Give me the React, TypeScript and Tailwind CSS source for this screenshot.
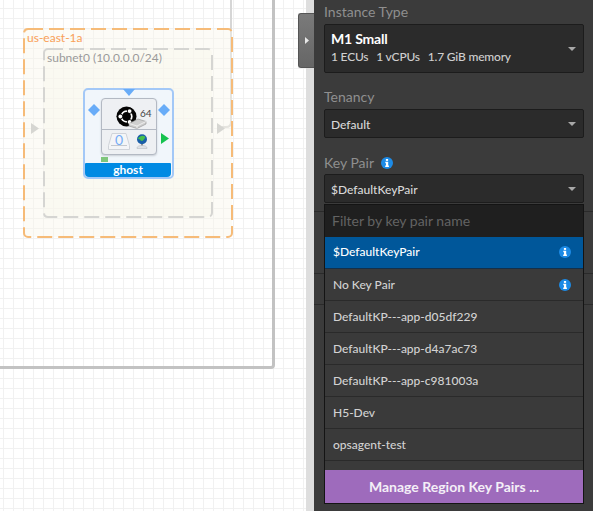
import React from "react";

const keyPairs = [
  { name: "$DefaultKeyPair", info: true, selected: true },
  { name: "No Key Pair", info: true },
  { name: "DefaultKP---app-d05df229" },
  { name: "DefaultKP---app-d4a7ac73" },
  { name: "DefaultKP---app-c981003a" },
  { name: "H5-Dev" },
  { name: "opsagent-test" },
];

const Caret = () => (
  <svg width="8" height="4" viewBox="0 0 8 4" className="shrink-0">
    <path d="M0 0h8L4 4z" fill="#a8a8a8" />
  </svg>
);

const InfoIcon = () => (
  <svg width="12" height="12" viewBox="0 0 12 12" className="shrink-0">
    <circle cx="6" cy="6" r="6" fill="#1d8be6" />
    <rect x="4.900" y="2" width="2.200" height="1.900" fill="#fff" />
    <path d="M4.300 4.800h2.900v3.800h.7V10H4.200V8.600h.8V6.200h-.7z" fill="#fff" />
  </svg>
);

const Select = ({ children, className }: { children: React.ReactNode; className: string }) => (
  <div
    className={`flex items-center justify-between pl-[6px] pr-[7px] rounded-[2px] border border-[#1c1c1c] bg-[#2b2b2b] ${className}`}
  >
    <div className="pb-[2px]">{children}</div>
    <Caret />
  </div>
);

const Port = ({ className, color = "#d6d6d2" }: { className: string; color?: string }) => (
  <svg width="8" height="11" viewBox="0 0 8 11" className={`absolute ${className}`}>
    <path d="M0 0l8 5.500L0 11z" fill={color} />
  </svg>
);

const Diamond = ({ className }: { className: string }) => (
  <svg width="12" height="12" viewBox="0 0 12 12" className={`absolute ${className}`}>
    <path d="M6 0l6 6-6 6-6-6z" fill="#68acf8" />
  </svg>
);

const DashedBox = ({ stroke }: { stroke: string }) => (
  <svg width="100%" height="100%" className="absolute inset-0">
    <rect
      x="1"
      y="1"
      width="calc(100% - 2px)"
      height="calc(100% - 2px)"
      rx="4"
      fill="#f9f6ea"
      fillOpacity=".45"
      stroke={stroke}
      strokeWidth="2"
      strokeDasharray="15 6"
    />
  </svg>
);

const UbuntuIcon = () => (
  <svg width="54" height="31" viewBox="0 0 54 31" className="absolute left-0 top-0">
    <circle cx="24.500" cy="17.500" r="10" fill="#050505" />
    <circle cx="24.500" cy="17.500" r="5.300" fill="none" stroke="#fff" strokeWidth="1.700" />
    {/* the three gaps + dots of the logo */}
    <circle cx="17.800" cy="17.500" r="3" fill="#050505" />
    <circle cx="27.850" cy="11.700" r="3" fill="#050505" />
    <circle cx="27.850" cy="23.300" r="3" fill="#050505" />
    <circle cx="18.300" cy="17.500" r="1.900" fill="#fff" />
    <circle cx="27.600" cy="12.100" r="1.900" fill="#fff" />
    <circle cx="27.600" cy="22.900" r="1.900" fill="#fff" />
    {/* volume */}
    <path d="M27 24.500l9-4.500 8 2.500v2.500l-9 4.500-8-2.500z" fill="#cfcfcf" stroke="#8f8f8f" strokeWidth=".6" />
    <path d="M27 24.500l8 2.500 9-4.500M35 27v2.500" fill="none" stroke="#f5f5f5" strokeWidth=".8" />
  </svg>
);

const DiskIcon = () => (
  <div className="relative w-[22px] h-[17px]">
    <svg width="22" height="17" viewBox="0 0 22 17" className="absolute inset-0">
      <path d="M4 .5h14l3.500 12v4H.5v-4z" fill="#f4f5f7" stroke="#cfd3d9" />
      <path d="M3 12.500h16" stroke="#c4c8ce" />
    </svg>
    <span className="absolute inset-x-0 top-[-1px] text-center text-[14px] leading-[16px] text-[#76adf6] font-['Lato',sans-serif]">
      0
    </span>
  </div>
);

const GlobeIcon = () => (
  <svg width="12" height="15" viewBox="0 0 12 15">
    <circle cx="6" cy="5.200" r="5" fill="#1b5fa8" />
    <path d="M2 4.500c2-3 5-3.500 7-2 .8 1.500-.8 2-1.500 3.500-1 1.500-3 1-3 0-.2-1-2-.5-2.500-1.500z" fill="#46c04a" />
    <path d="M5 10h2v2H5z" fill="#8a8f96" />
    <path d="M1 14c0-1.500 2-2.500 5-2.500s5 1 5 2.500v.5H1z" fill="#dfe2e6" stroke="#b8bcc3" strokeWidth=".6" />
  </svg>
);

const InstanceNode = () => (
  <div className="relative ml-[40px] mt-[20px] w-[91px] h-[91px] flex flex-col rounded-[5px] border-2 border-[#a3c8f7] bg-[#f1f6fb]">
    <svg width="12" height="7" viewBox="0 0 12 7" className="absolute left-[38px] top-[-1px]">
      <path d="M0 0h12L6 7z" fill="#68acf8" />
    </svg>
    <Diamond className="left-[3px] top-[14px]" />
    <Diamond className="left-[73px] top-[14px]" />
    <Port className="left-[76px] top-[43px]" color="#16c24f" />

    <div className="mt-[8px] ml-[16px] w-[56px] h-[57px] flex flex-col rounded-[4px] border border-[#b3b9c3] bg-[#eef0f3] shadow-[0_1px_2px_#c9ced6]">
      <div className="relative h-[31px] shrink-0 border-b border-[#b3b9c3]">
        <UbuntuIcon />
        <span className="absolute left-[38px] top-[8px] text-[10px] leading-[13px] text-[#454545] font-['Lato',sans-serif]">
          64
        </span>
      </div>
      <div className="flex items-center gap-[6px] pl-[6px] pt-[3px]">
        <DiskIcon />
        <GlobeIcon />
      </div>
    </div>

    <div className="ml-[16px] mt-[2px] w-[7px] h-[5px] bg-[#7fc67c]" />
    <div className="mt-auto mr-[1px] h-[14px] rounded-b-[4px] rounded-t-[1px] bg-[#008ae3] text-center text-[12px] leading-[14px] font-bold text-white font-['Lato',sans-serif]">
      ghost
    </div>
  </div>
);

const Canvas = () => (
  <div className="relative w-[306px] h-full shrink-0 overflow-hidden bg-white bg-[linear-gradient(#f1f1f1_1px,transparent_1px),linear-gradient(90deg,#f1f1f1_1px,transparent_1px)] bg-[size:10px_10px] bg-[position:3px_8px]">
    {/* vpc frame */}
    <div className="absolute left-[-20px] top-[-20px] w-[295px] h-[389px] rounded-[4px] border-[3px] border-[#c2c2c2]" />

    {/* connector going up out of the zone */}
    <svg width="240" height="140" viewBox="0 0 240 140" className="absolute left-0 top-0">
      <path d="M231 0v122q0 5-5 5h-4" fill="none" stroke="#d6d6d6" strokeWidth="2" />
    </svg>

    {/* availability zone */}
    <div className="absolute left-[23px] top-[28px] w-[210px] h-[210px] font-['Lato',sans-serif] text-[12px]">
      <DashedBox stroke="#f6bb78" />
      <div className="relative h-[20px] pl-[4px] leading-[20px] text-[#f9a058]">us-east-1a</div>
      <div className="relative mx-[20px] h-[170px]">
        <DashedBox stroke="#d5d5d2" />
        <div className="relative h-[20px] pl-[4px] leading-[20px] text-[#9a9a9a]">subnet0 (10.0.0.0/24)</div>
        <InstanceNode />
      </div>
    </div>

    <Port className="left-[31px] top-[123px]" />
    <Port className="left-[217px] top-[123px]" />
  </div>
);

const Panel = () => (
  <div className="relative w-[279px] h-full shrink-0 bg-[#3b3b3b] font-['Lato',sans-serif]">
    <div className="pl-[10px] pr-[9px]">
      <div className="h-[24px] pt-[3px] text-[14px] leading-[18px] text-[#8f8f8f]">Instance Type</div>
      <Select className="h-[49px]">
        <div className="mb-[1px] text-[14px] leading-[18px] font-bold tracking-[-0.2px] text-white">M1 Small</div>
        <div className="flex gap-[8px] text-[12px] leading-[16px] font-medium tracking-[-0.2px] text-[#cfcfcf]">
          <span>1 ECUs</span>
          <span>1 vCPUs</span>
          <span>1.7 GiB memory</span>
        </div>
      </Select>
      <div className="h-[36px] pt-[15px] text-[14px] leading-[18px] text-[#8f8f8f]">Tenancy</div>
      <Select className="h-[29px]">
        <span className="text-[12px] font-medium text-[#d8d8d8]">Default</span>
      </Select>
      <div className="flex items-center gap-[7px] h-[36px] pt-[13px] text-[14px] leading-[18px] text-[#8f8f8f]">
        Key Pair <InfoIcon />
      </div>
      <Select className="h-[29px]">
        <span className="text-[12px] font-medium text-[#d8d8d8]">$DefaultKeyPair</span>
      </Select>
    </div>

    {/* rows hidden behind the open dropdown */}
    <div className="mt-[8px] border-t border-[#2a2a2a] h-[62px]" />
    <div className="border-t border-[#2a2a2a] h-[31px]" />
    <div className="border-t border-[#2a2a2a] h-[31px]" />

    {/* open key pair dropdown */}
    <div className="absolute left-[10px] top-[204px] w-[260px] h-[300px] flex flex-col border border-[#141414] bg-[#3a3a3a]">
      <div className="h-[32px] shrink-0 flex items-center px-[7px] pb-[2px] bg-[#1f1f1f] text-[14px] text-[#636363]">
        Filter by key pair name
      </div>
      {keyPairs.map((kp) => (
        <div
          key={kp.name}
          className={`h-[32px] shrink-0 flex items-center justify-between pl-[8px] pr-[12px] text-[12px] font-medium border-b ${
            kp.selected ? "bg-[#00579a] text-white border-[#14304a] pb-[1px]" : "text-[#d2d2d2] border-[#2a2a2a]"
          }`}
        >
          {kp.name}
          {kp.info && <InfoIcon />}
        </div>
      ))}
      <div className="mt-auto h-[33px] shrink-0 flex items-center justify-center bg-[#9e6bbc] text-[14px] font-bold text-[#f4eff7]">
        Manage Region Key Pairs ...
      </div>
    </div>
  </div>
);

export default function App() {
  return (
    <div className="relative flex w-[593px] h-[511px] overflow-hidden">
      <Canvas />
      <div className="w-[8px] h-full shrink-0 bg-[#dedede]" />
      <Panel />
      {/* handle sits over the light strip */}
      <div className="absolute left-[298px] top-[13px] w-[16px] h-[55px] flex items-center justify-center rounded-l-[3px] border border-r-0 border-[#555] bg-[linear-gradient(#7a7a7a,#666)]">
        <svg width="4" height="7" viewBox="0 0 4 7">
          <path d="M0 0l4 3.500L0 7z" fill="#e8e8e8" />
        </svg>
      </div>
    </div>
  );
}
